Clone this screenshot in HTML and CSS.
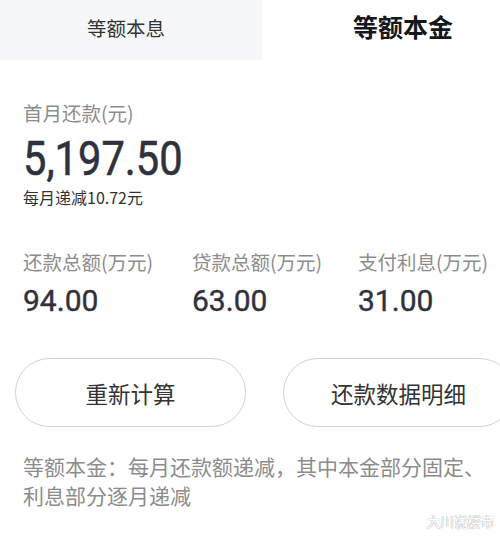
FILE: index.html
```html
<!DOCTYPE html>
<html lang="zh-CN">

<head>
    <meta charset="UTF-8">
    <meta name="viewport" content="width=device-width, initial-scale=1.0">
    <title>房贷计算结果</title>
    <link rel="stylesheet" href="styles.css">
</head>

<body>
    <div class="page">
        <div class="tabs">
            <div class="tab">等额本息</div>
            <div class="tab active">等额本金</div>
        </div>

        <div class="content">
            <p class="label">首月还款(元)</p>
            <div class="first-amount"><span>5,197.50</span></div>
            <p class="reduce">每月递减10.72元</p>

            <div class="stats">
                <div class="stat">
                    <p class="label">还款总额(万元)</p>
                    <p class="value">94.00</p>
                </div>
                <div class="stat">
                    <p class="label">贷款总额(万元)</p>
                    <p class="value">63.00</p>
                </div>
                <div class="stat">
                    <p class="label">支付利息(万元)</p>
                    <p class="value">31.00</p>
                </div>
            </div>
        </div>

        <div class="actions">
            <button class="btn">重新计算</button>
            <button class="btn">还款数据明细</button>
        </div>

        <p class="desc">等额本金：每月还款额递减，其中本金部分固定、<br>利息部分逐月递减</p>

        <span class="watermark">大川说楼市</span>
    </div>
</body>

</html>
```

FILE: styles.css
```css
* {
    padding: 0;
    margin: 0;
    box-sizing: border-box;
}

body {
    background: #fff;
    font-family: "Noto Sans CJK SC", sans-serif;
    color: #333;
}

.page {
    position: relative;
    width: 500px;
    height: 540px;
    overflow: hidden;
}

/* tabs */
.tabs {
    display: flex;
    height: 60px;
}

.tabs .tab {
    display: flex;
    align-items: center;
    justify-content: center;
    width: 262px;
    padding-right: 10px;
    padding-bottom: 6px;
    background: #f6f7f9;
    font-size: 19.5px;
    color: #333;
}

.tabs .tab.active {
    flex: 1;
    width: auto;
    padding-right: 0;
    padding-left: 44px;
    padding-bottom: 8px;
    background: #fff;
    font-size: 25px;
    font-weight: 700;
    color: #15171c;
}

/* result */
.content {
    padding-left: 23px;
}

.label {
    font-size: 19.5px;
    line-height: 26px;
    color: #8c8c8c;
    white-space: nowrap;
}

.content > .label {
    margin-top: 40px;
}

.first-amount {
    height: 49px;
    margin-top: 8px;
    font-family: Roboto, sans-serif;
    font-size: 49px;
    line-height: 49px;
    font-weight: 400;
    color: #2f323d;
    -webkit-text-stroke: 0.6px #2f323d;
}

.first-amount span {
    display: inline-block;
    transform: scaleX(0.85);
    transform-origin: left center;
}

.reduce {
    margin-top: 3px;
    font-size: 16px;
    line-height: 22px;
    color: #333;
}

.stats {
    display: grid;
    grid-template-columns: 169px 166px 1fr;
    margin-top: 41px;
}

.stat .value {
    margin-top: 8px;
    font-family: Roboto, sans-serif;
    font-size: 30px;
    line-height: 36px;
    font-weight: 400;
    color: #2f323d;
    -webkit-text-stroke: 0.4px #2f323d;
}

/* buttons */
.actions {
    display: flex;
    gap: 37px;
    padding-left: 15px;
    margin-top: 39px;
}

.btn {
    flex: none;
    width: 231px;
    height: 69px;
    border: 1.5px solid #d2d2d2;
    border-radius: 35px;
    background: #fff;
    font-family: "Noto Sans CJK SC", sans-serif;
    font-size: 22.5px;
    color: #333;
    cursor: pointer;
}

.desc {
    margin-top: 25px;
    padding-left: 23px;
    font-size: 21px;
    line-height: 29px;
    color: #8c8c8c;
    white-space: nowrap;
}

.watermark {
    position: absolute;
    right: 6px;
    bottom: 9px;
    font-size: 14px;
    color: #fff;
    text-shadow: 0 0 1px #9a9a9a, 0 0 1px #bbb;
    letter-spacing: -0.5px;
}
```
